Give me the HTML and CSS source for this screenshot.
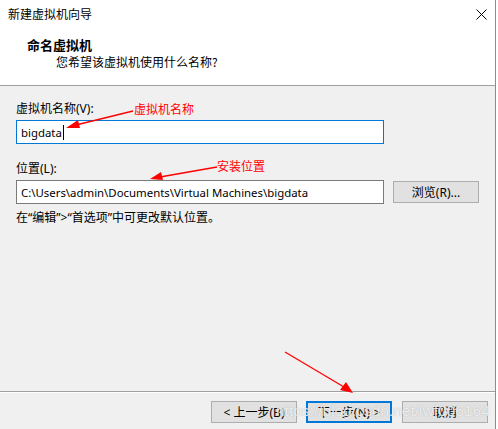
FILE: index.html
```html
<!DOCTYPE html>
<html lang="zh-CN">
<head>
<meta charset="utf-8">
<title>新建虚拟机向导</title>
<link rel="stylesheet" href="styles.css">
</head>
<body>
<div class="window">
  <div class="header">
    <div class="titlebar">
      <span class="title">新建虚拟机向导</span>
      <svg class="close" width="11" height="11" viewBox="0 0 11 11"><path d="M0.5 0.5 L10.5 10.5 M10.5 0.5 L0.5 10.5" stroke="#000" stroke-width="1" fill="none"/></svg>
    </div>
    <div class="heading">命名虚拟机</div>
    <div class="sub">您希望该虚拟机使用什么名称?</div>
  </div>
  <div class="content">
    <div class="label label-first">虚拟机名称(V):</div>
    <div class="field field-focus"><span>bigdata</span><span class="caret"></span></div>
    <div class="label label-second">位置(L):</div>
    <div class="row">
      <div class="field field-wide">C:\Users\admin\Documents\Virtual Machines\bigdata</div>
      <div class="btn btn-browse">浏览(R)...</div>
    </div>
    <div class="hint">在“编辑”&gt;“首选项”中可更改默认位置。</div>
  </div>
  <div class="footer">
    <div class="btn">&lt; 上一步(B)</div>
    <div class="btn btn-default">下一步(N) &gt;</div>
    <div class="btn btn-cancel">取消</div>
  </div>

  <div class="note note-name">虚拟机名称</div>
  <div class="note note-loc">安装位置</div>
  <svg class="arrows" width="498" height="429" viewBox="0 0 498 429">
    <g stroke="#ff0000" stroke-width="1.3" fill="#ff0000">
      <line x1="133" y1="111" x2="76" y2="125"/>
      <polygon points="66,128 78,120 80,128" stroke="none"/>
      <line x1="217" y1="167" x2="160" y2="177"/>
      <polygon points="150,179 161,172 163,180" stroke="none"/>
      <line x1="285" y1="352" x2="344" y2="387"/>
      <polygon points="353,393 340,390 346,382" stroke="none"/>
    </g>
  </svg>
  <div class="watermark">https://blog.csdn.net/lwf006164</div>
</div>
</body>
</html>
```
FILE: styles.css
```css
html, body {
  margin: 0;
  padding: 0;
  background: #ffffff;
}
body {
  width: 498px;
  height: 429px;
  overflow: hidden;
  font-family: "Noto Sans", "Noto Sans CJK SC", sans-serif;
  font-size: 12px;
  color: #000;
}
.window {
  position: relative;
  width: 495px;
  height: 429px;
  border-right: 1px solid #8c8c8c;
  background: #f0f0f0;
  display: flex;
  flex-direction: column;
}
.header {
  background: #ffffff;
  height: 85px;
  border-bottom: 1px solid #a0a0a0;
}
.titlebar {
  height: 28px;
  display: flex;
  align-items: center;
  justify-content: space-between;
  padding: 0 8px 0 8px;
}
.title {
  line-height: 28px;
  font-family: "Noto Sans CJK SC", sans-serif;
}
.close {
  display: block;
}
.heading {
  margin-top: 8px;
  padding-left: 27px;
  font-family: "Noto Sans CJK SC", sans-serif;
  font-weight: bold;
  font-size: 13px;
  line-height: 18px;
}
.sub {
  padding-left: 56px;
  font-family: "Noto Sans CJK SC", sans-serif;
  line-height: 16px;
}
.content {
  flex: 1;
  padding: 0 16px;
}
.label {
  line-height: 16px;
}
.label-first {
  margin-top: 15px;
  margin-bottom: 3px;
}
.label-second {
  margin-top: 17px;
  margin-bottom: 3px;
}
.field {
  box-sizing: border-box;
  height: 24px;
  width: 368px;
  background: #ffffff;
  border: 1px solid #7a7a7a;
  padding-left: 4px;
  display: flex;
  align-items: center;
  font-size: 11.4px;
  white-space: nowrap;
}
.field-focus {
  border-color: #0078d7;
}
.caret {
  display: inline-block;
  width: 1px;
  height: 15px;
  background: #000;
  margin-left: 1px;
}
.row {
  display: flex;
  align-items: center;
  gap: 9px;
}
.btn {
  box-sizing: border-box;
  width: 86px;
  height: 22px;
  background: #e1e1e1;
  border: 1px solid #adadad;
  display: flex;
  align-items: center;
  justify-content: center;
  font-size: 12px;
}
.hint {
  margin-top: 6px;
  line-height: 16px;
}
.footer {
  height: 38px;
  box-sizing: border-box;
  border-top: 1px solid #a0a0a0;
  box-shadow: inset 0 1px 0 #ffffff;
  padding: 9px 7px 0 0;
  display: flex;
  justify-content: flex-end;
  gap: 9px;
}
.btn-default {
  border: 2px solid #0078d7;
}
.btn-cancel {
  margin-left: 1px;
}
.note {
  position: absolute;
  color: #ff0000;
  font-family: "Noto Sans CJK SC", sans-serif;
  font-size: 12px;
  line-height: 16px;
}
.note-name {
  left: 134px;
  top: 101px;
}
.note-loc {
  left: 217px;
  top: 158px;
}
.arrows {
  position: absolute;
  left: 0;
  top: 0;
  pointer-events: none;
}
.watermark {
  position: absolute;
  left: 276px;
  top: 402px;
  font-family: "Liberation Sans", sans-serif;
  font-size: 15.5px;
  line-height: 17px;
  color: rgba(255, 255, 255, 0.8);
  text-shadow: 0 0 1px rgba(120, 120, 120, 0.6);
  white-space: nowrap;
}
```
